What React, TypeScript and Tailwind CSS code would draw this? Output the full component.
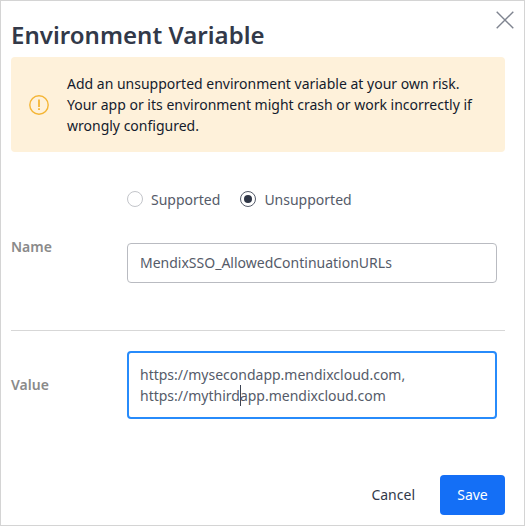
export default function App() {
  return (
    <div className="relative flex h-[526px] w-[525px] flex-col border border-[#d4d4d4] bg-white pl-[10px] pr-[19px] font-['Noto_Sans',sans-serif] text-[14px] text-[#555b69]">
      <svg className="absolute right-[10px] top-[10px]" width="18" height="18" viewBox="0 0 18 18" fill="none" stroke="#7f8490" strokeWidth="1.4">
        <path d="M.7.7l16.6 16.6M17.3.7L.7 17.3" />
      </svg>
      <h1 className="mt-[18px] h-8 text-[24px] font-semibold leading-8 tracking-[0.04px] text-[#323949]">Environment Variable</h1>
      <div className="mt-[6px] flex h-[95px] rounded-[4px] bg-[#fef1da] pl-[18px] pt-4 text-[#141b2c]">
        <svg className="mr-[18px] mt-[21.5px] shrink-0" width="20" height="20" viewBox="0 0 20 20" fill="none" stroke="#f4b535" strokeWidth="1.4">
          <circle cx="10" cy="10" r="9.2" />
          <path d="M10 4.5v7.5M10 13.3v1.8" strokeWidth="1.8" />
        </svg>
        <p className="whitespace-nowrap leading-[21px]">
          Add an unsupported environment variable at your own risk.<br />
          Your app or its environment might crash or work incorrectly if<br />
          wrongly configured.
        </p>
      </div>
      <div className="ml-[116px] mt-[37px] flex h-[21px]">
        <span className="mt-[2px] size-4 rounded-full border border-[#c3c5ca]" />
        <span className="ml-2 leading-[21px]">Supported</span>
        <span className="ml-5 mt-[2px] flex size-4 items-center justify-center rounded-full border border-[#555b69]">
          <span className="size-2 rounded-full bg-[#2f3646]" />
        </span>
        <span className="ml-2 leading-[21px]">Unsupported</span>
      </div>
      <div className="mt-[33px] flex h-10">
        <span className="mt-[-7px] w-[116px] font-semibold leading-[21px] text-[#8a8a8a]">Name</span>
        <div className="h-10 w-[370px] rounded-[4px] border border-[#b9bbc1] px-3 pt-[8px] leading-[21px]">MendixSSO_AllowedContinuationURLs</div>
      </div>
      <div className="mt-[47px] h-px w-[494px] bg-[#d7d7d7]" />
      <div className="mt-5 flex h-[68px]">
        <span className="mt-[23px] w-[116px] font-semibold leading-[21px] text-[#8a8a8a]">Value</span>
        <div className="h-[68px] w-[370px] rounded-[4px] border-2 border-[#278bfb] px-[11px] pt-[11px] leading-[21px]">
          https://mysecondapp.mendixcloud.com,<br />
          https://mythird<span className="-my-1 mr-[-1px] inline-block h-[21px] w-px bg-[#3c4352] align-[-1px]" />app.mendixcloud.com
        </div>
      </div>
      <div className="mt-[56px] flex h-10 justify-end">
        <button className="mr-[25px] h-10 pb-px text-[#323949]">Cancel</button>
        <button className="h-10 w-[65px] rounded-[4px] bg-[#146ff6] pb-px text-white">Save</button>
      </div>
    </div>
  );
}
